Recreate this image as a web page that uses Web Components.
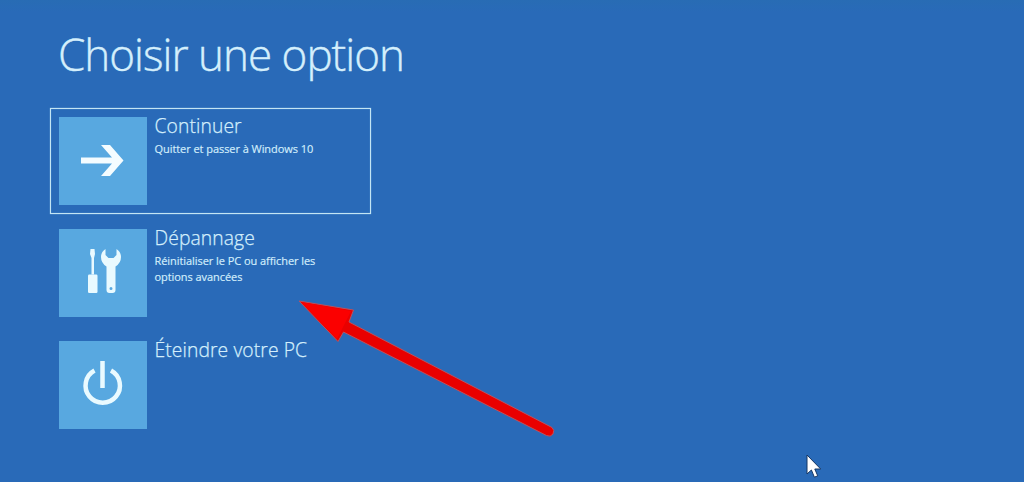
<!DOCTYPE html>
<html lang="fr">
<head>
  <meta charset="utf-8">
  <title>Choisir une option</title>
  <style>
    html, body {
      height: 100%;
      margin: 0;
      overflow: hidden;
    }
    body {
      font-family: "Open Sans", "Noto Sans", sans-serif;
      background: #296ab8;
      color: #d4effc;
    }
  </style>

  <template id="screen.tpl">
    <style>
      :host {
        display: block;
        position: relative;
        box-sizing: border-box;
        height: 100%;
        padding: 27px 0 0 50px;
        background: linear-gradient(#286cb4 0, #296ab8 12px);
      }
      h1 {
        margin: 0 0 27px 8px;
        font-size: 44px;
        font-weight: 300;
        line-height: 54px;
        letter-spacing: -1px;
        white-space: nowrap;
        -webkit-text-stroke: 0.4px;
      }
      .list {
        display: flex;
        flex-direction: column;
        align-items: flex-start;
        gap: 6px;
      }
    </style>
    <h1><slot name="title"></slot></h1>
    <div class="list"><slot></slot></div>
    <slot name="overlay"></slot>
  </template>

  <template id="option.tpl">
    <style>
      :host {
        display: flex;
        box-sizing: border-box;
        width: 321px;
        height: 106px;
        padding: 8px;
        border: 1px solid transparent;
        gap: 7.5px;
      }
      :host([selected]) {
        border-color: #c3e5f4;
        box-shadow: 0 0 1px #93c6e8, inset 0 0 1px #93c6e8;
      }
      .tile {
        flex: none;
        width: 88px;
        height: 88px;
        background: #58a8e0;
      }
      .tile ::slotted(svg) {
        display: block;
      }
      .text {
        white-space: nowrap;
      }
      .label {
        margin-top: -4px;
        font-size: 19.3px;
        font-weight: 300;
        line-height: 26px;
        letter-spacing: 0.1px;
        -webkit-text-stroke: 0.25px;
      }
      .hint {
        margin-top: 2px;
        font-size: 11px;
        line-height: 16px;
        letter-spacing: -0.06px;
        -webkit-text-stroke: 0.15px;
      }
    </style>
    <div class="tile"><slot name="icon"></slot></div>
    <div class="text">
      <div class="label"><slot name="label"></slot></div>
      <div class="hint"><slot></slot></div>
    </div>
  </template>

  <template id="pointer.tpl">
    <style>
      :host {
        position: absolute;
        left: 806px;
        top: 454px;
      }
      svg { display: block; }
    </style>
    <svg width="17" height="26" viewBox="0 0 17 26">
      <path d="M1 1V20L5.4 16L8.4 23.2L11.7 21.8L8.8 15H14.7Z" fill="#fff" stroke="#173763" stroke-width="1"/>
    </svg>
  </template>

  <template id="arrow.tpl">
    <style>
      :host {
        position: absolute;
        left: 290px;
        top: 290px;
      }
      svg { display: block; }
    </style>
    <svg width="280" height="155" viewBox="0 0 280 155">
      <path d="M9 11L63.5 20L59 32L262 137.5Q265 140 263 144Q260.5 147.5 256.5 145.5L53.5 42L48 51.5Z" fill="#e90000" stroke="#b9525f" stroke-width="1" stroke-linejoin="round"/>
      <path d="M11 12L61 21L47 49Z" fill="#fb0000"/>
    </svg>
  </template>

  <script>
    function define(name, tpl) {
      window.customElements.define(name, class extends HTMLElement {
        constructor() {
          super();
          const shadow = this.attachShadow({ mode: 'open' });
          shadow.appendChild(document.getElementById(tpl).content.cloneNode(true));
        }
      });
    }

    define('boot-screen', 'screen.tpl');
    define('boot-option', 'option.tpl');
    define('mouse-pointer', 'pointer.tpl');
    define('red-arrow', 'arrow.tpl');
  </script>
</head>

<body>
  <boot-screen>
    <span slot="title">Choisir une option</span>

    <boot-option selected>
      <svg slot="icon" width="88" height="88" viewBox="0 0 88 88">
        <path d="M22 40.5H53L42 28H51L64.5 43.5L51 59H42L53 46.5H22Z" fill="#f4fcff"/>
      </svg>
      <span slot="label">Continuer</span>
      Quitter et passer à Windows 10
    </boot-option>

    <boot-option>
      <svg slot="icon" width="88" height="88" viewBox="0 0 88 88">
        <g fill="#e9faff">
          <path d="M31.5 20H35.5L36 25L35 29V45.5H32.5V29L31 25Z"/>
          <rect x="29" y="45.5" width="9.5" height="18.500" rx="1.2"/>
          <path fill-rule="evenodd" d="M46.500 20Q42 23 42 28Q42 34 47.500 37.500V61Q47.500 64 50.500 64H53.500Q56.500 64 56.500 61V37.500Q62 34 62 28Q62 23 57.500 20V26L54.500 29H49.500L46.500 26ZM52 58A1.500 1.500 0 1 1 52 61A1.500 1.500 0 1 1 52 58Z"/>
        </g>
      </svg>
      <span slot="label">Dépannage</span>
      Réinitialiser le PC ou afficher les<br>options avancées
    </boot-option>

    <boot-option>
      <svg slot="icon" width="88" height="88" viewBox="0 0 88 88" fill="none" stroke="#e9faff" stroke-width="4.5">
        <path d="M43.500 20V47M35.500 29.500A17.200 17.200 0 1 0 52 29.500"/>
      </svg>
      <span slot="label">Éteindre votre PC</span>
    </boot-option>

    <red-arrow slot="overlay"></red-arrow>
    <mouse-pointer slot="overlay"></mouse-pointer>
  </boot-screen>
</body>

</html>
